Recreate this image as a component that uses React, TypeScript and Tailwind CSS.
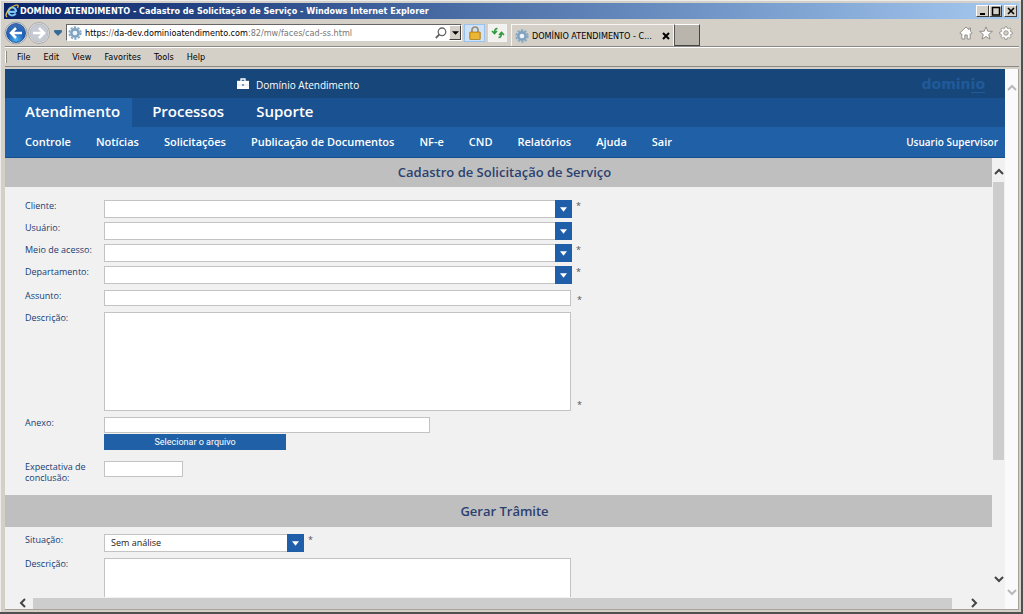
import React from "react";

const GEAR =
  "M8 0.8l1 0 .5 1.9 1.3.5 1.7-1 1.4 1.4-1 1.7.5 1.3 1.9.5v2l-1.9.5-.5 1.3 1 1.7-1.4 1.4-1.7-1-1.3.5-.5 1.9h-2l-.5-1.9-1.3-.5-1.7 1-1.4-1.4 1-1.7-.5-1.3L.7 9.100v-2l1.900-.5.5-1.300-1-1.700 1.400-1.400 1.700 1 1.300-.5L7 .8z";

function PageGear() {
  return (
    <svg viewBox="0 0 16 16" className="size-[14px] shrink-0" aria-hidden="true">
      <circle cx="8" cy="8" r="6.6" fill="none" stroke="#86a8c4" strokeWidth="2" strokeDasharray="2.6 1.55" />
      <circle cx="8" cy="8" r="4.2" fill="#eef4f8" stroke="#7fa3c0" strokeWidth="3" />
    </svg>
  );
}

function IeLogo() {
  return (
    <svg viewBox="0 0 16 16" className="size-[14px] shrink-0" aria-hidden="true">
      <path d="M12.400 9H4.600M12.600 9c.2-3-1.800-5-4.300-5-2.600 0-4.400 2-4.400 4.600s1.900 4.500 4.400 4.500c1.800 0 3.200-.8 4-2.200" fill="none" stroke="#7cc4f4" strokeWidth="2.400" />
      <path d="M2.500 14.800C-.5 14 2 8.500 6 5c4-3.600 8.500-5 9-2.800.1.800-.2 1.600-.6 2.400" fill="none" stroke="#f2c544" strokeWidth="1.400" />
    </svg>
  );
}

function NavArrows() {
  return (
    <div className="-ml-px flex items-center">
      <button type="button" aria-label="Back" className="h-6 w-6">
        <svg viewBox="0 0 24 24" className="size-6">
          <defs>
            <radialGradient id="back" cx="50%" cy="85%" r="80%">
              <stop offset="0" stopColor="#4bb2ee" />
              <stop offset=".55" stopColor="#1d5fb8" />
              <stop offset="1" stopColor="#3c70b4" />
            </radialGradient>
          </defs>
          <circle cx="12" cy="12" r="11" fill="#e4e9f0" stroke="#8a8f98" strokeWidth=".8" />
          <circle cx="12" cy="12" r="9.500" fill="url(#back)" stroke="#1b4586" strokeWidth=".8" />
          <path d="M18 12H7.500M12 7l-5 5 5 5" fill="none" stroke="#fff" strokeWidth="2.600" />
        </svg>
      </button>
      <button type="button" aria-label="Forward" className="h-6 w-[22px]">
        <svg viewBox="0 0 22 24" className="h-6 w-[22px]">
          <circle cx="11" cy="12" r="10.500" fill="#e6e7e9" stroke="#9b9b9b" strokeWidth=".8" />
          <circle cx="11" cy="12" r="9" fill="#c5cad3" stroke="#a7abb2" strokeWidth=".6" />
          <path d="M5 12h10.500M11 7l5 5-5 5" fill="none" stroke="#fff" strokeWidth="2.600" />
        </svg>
      </button>
      <button type="button" aria-label="Recent pages" className="flex w-4 justify-center">
        <svg viewBox="0 0 8 6" className="h-[6px] w-2">
          <path d="M.5.5h7v1.500L4 5.500.5 2z" fill="#2f6c9c" stroke="#1d4f78" strokeWidth=".6" />
        </svg>
      </button>
    </div>
  );
}

function CaptionButton({ label, children }: { label: string; children: React.ReactNode }) {
  return (
    <button
      type="button"
      aria-label={label}
      className="flex h-3 w-[13px] items-center justify-center border border-t-white border-r-[#404040] border-b-[#404040] border-l-white bg-[#d4d0c8]"
    >
      <svg viewBox="0 0 10 10" className="size-[10px]" fill="none" stroke="#000">
        {children}
      </svg>
    </button>
  );
}

function Chevron({ className, d }: { className: string; d: string }) {
  return (
    <svg viewBox="0 0 10 10" className={className} fill="none" stroke="currentColor" strokeWidth="2" aria-hidden="true">
      <path d={d} />
    </svg>
  );
}
const UP = "M1 7l4-4 4 4";
const DOWN = "M1 3l4 4 4-4";
const LEFT = "M7 1L3 5l4 4";
const RIGHT = "M3 1l4 4-4 4";

const box = "block border border-[#c3c3c3] bg-white text-[#222] outline-none";

function Combo({ id, wide, options }: { id: string; wide?: boolean; options: string[] }) {
  return (
    <div className={wide ? "relative w-[468px]" : "relative w-[200px]"}>
      <select id={id} className={`${box} h-[18px] w-full appearance-none px-[6px] text-[9px] leading-4`}>
        {options.map((o) => (
          <option key={o}>{o}</option>
        ))}
      </select>
      <span className="pointer-events-none absolute top-0 right-0 flex h-[18px] w-[17px] items-center justify-center bg-[#1f5fa9]">
        <svg viewBox="0 0 8 5" className="h-[5px] w-[7px]" aria-hidden="true">
          <path d="M0 0h8L4 5z" fill="#fff" />
        </svg>
      </span>
    </div>
  );
}

function Row({ id, label, mark, children }: { id: string; label: string; mark?: "top" | "bottom"; children: React.ReactNode }) {
  return (
    <div className="flex items-start">
      <label htmlFor={id} className="w-[79px] shrink-0 text-[9px] leading-[11px] font-medium text-[#173c72]">
        {label}
      </label>
      <div className="shrink-0">{children}</div>
      {mark && (
        <span className={`text-[9px] text-[#555] ${mark === "bottom" ? "ml-[6px] self-end leading-3" : "ml-1 leading-3"}`}>*</span>
      )}
    </div>
  );
}

const combos: { id: string; label: string; required: boolean }[] = [
  { id: "cliente", label: "Cliente:", required: true },
  { id: "usuario", label: "Usuário:", required: false },
  { id: "meio", label: "Meio de acesso:", required: true },
  { id: "departamento", label: "Departamento:", required: true },
];

export default function App() {
  return (
    <div className="flex h-screen flex-col overflow-hidden border-r-2 border-b-2 border-[#505050] bg-[#d4d0c8] font-['Open_Sans','Noto_Sans',sans-serif]">
      <div className="flex min-h-0 flex-1 flex-col border-t border-l border-[#ececec] pt-[2px] pr-[2px] pb-[2px] pl-1">
        <header className="shrink-0 font-['DejaVu_Sans_Condensed','DejaVu_Sans',sans-serif] text-black">
          <div className="-ml-px flex h-4 items-center gap-px bg-linear-to-r from-[#0a246a] to-[#a6caf0] pr-[2px] pl-px text-white">
            <IeLogo />
            <h1 className="flex-1 truncate text-[9px] leading-4 font-bold">
              DOMÍNIO ATENDIMENTO - Cadastro de Solicitação de Serviço - Windows Internet Explorer
            </h1>
            <div className="flex">
              <CaptionButton label="Minimize">
                <path d="M2 8h5" strokeWidth="2" />
              </CaptionButton>
              <CaptionButton label="Maximize">
                <path d="M1.500 1v8h7V1M1 1.500h8" strokeWidth="1.500" />
              </CaptionButton>
              <span className="w-[2px]" />
              <CaptionButton label="Close">
                <path d="M2 2l6 6M8 2L2 8" strokeWidth="1.600" />
              </CaptionButton>
            </div>
          </div>

          <div className="flex h-7 items-center border-b border-[#8c8984] pr-[6px]">
            <NavArrows />
            <div className="flex h-[17px] w-[396px] items-center border border-t-[#666] border-r-white border-b-white border-l-[#666] bg-white pl-px">
              <PageGear />
              <div className="ml-[3px] flex h-full min-w-0 flex-1 items-center text-[9px] leading-4 whitespace-nowrap">
                <span>https:</span>
                <span className="text-[#777]">//</span>
                <span>da-dev.</span>
                <span>dominioatendimento.com</span>
                <span className="text-[#777]">:82/mw/faces/cad-ss.html</span>
              </div>
              <button type="button" aria-label="Search" className="mr-[2px]">
                <svg viewBox="0 0 12 12" className="size-3" fill="none" stroke="#666">
                  <circle cx="7" cy="4.800" r="3.800" strokeWidth="1.300" />
                  <path d="M4.300 7.500L.8 11" strokeWidth="1.800" />
                </svg>
              </button>
              <button
                type="button"
                aria-label="Show addresses"
                className="flex h-[15px] w-3 items-center justify-center border border-t-white border-r-[#404040] border-b-[#404040] border-l-white bg-[#d4d0c8]"
              >
                <svg viewBox="0 0 8 4" className="h-1 w-[7px]">
                  <path d="M0 0h8L4 4z" />
                </svg>
              </button>
            </div>
            <button type="button" aria-label="Security report" className="ml-[2px] flex h-[18px] w-[21px] items-center justify-center border border-[#9cc3ee] bg-[#cfe2f7]">
              <svg viewBox="0 0 12 14" className="h-[14px] w-3">
                <path d="M3 7V4a3 3 0 0 1 6 0v3" fill="none" stroke="#9b8e70" strokeWidth="1.700" />
                <rect x=".7" y="6" width="10.600" height="7.500" rx=".6" fill="#e5a91e" stroke="#a8740c" strokeWidth=".7" />
                <path d="M2 8h8M2 10h8M2 12h8" stroke="#f5cf62" strokeWidth=".7" />
              </svg>
            </button>
            <button type="button" aria-label="Refresh" className="ml-[3px] flex h-[18px] w-[19px] items-center justify-center border border-[#f4f4f4] bg-[#f2f1ee]">
              <svg viewBox="0 0 14 12" className="h-3 w-[14px]" fill="none" stroke="#2f9a3c" strokeWidth="1.600">
                <path d="M6.500 1.500Q3.500 1.500 3.500 6M1 4l2.500 2.500L6 4" />
                <path d="M7.500 10.500Q10.500 10.500 10.500 6M8 8L10.500 5.500 13 8" />
              </svg>
            </button>
            <div className="ml-[4px] flex h-[22px] w-[163px] items-center self-end border-t border-r border-l border-[#f7f6f3] px-[3px]">
              <PageGear />
              <span className="ml-[3px] flex-1 text-[9px] leading-4 whitespace-nowrap">DOMÍNIO ATENDIMENTO - C...</span>
              <button type="button" aria-label="Close tab">
                <svg viewBox="0 0 8 8" className="size-2" stroke="#000" strokeWidth="2">
                  <path d="M1 1l6 6M7 1L1 7" />
                </svg>
              </button>
            </div>
            <button
              type="button"
              aria-label="New tab"
              className="h-[22px] w-[26px] self-end border border-t-white border-r-[#444] border-b-[#444] border-l-[#555] bg-[#b9b5ad]"
            />
            <div className="ml-auto flex items-center gap-[6px]">
              <button type="button" aria-label="Home">
                <svg viewBox="0 0 14 14" className="size-[14px]" fill="#fff" stroke="#8b8780" strokeWidth=".9">
                  <path d="M7 1L.8 7l1.400 1.200.6-.5V13h3V9h2.400v4h3V7.700l.6.500L13.200 7 11.500 5.300V2H10v1.800z" />
                </svg>
              </button>
              <button type="button" aria-label="Favorites">
                <svg viewBox="0 0 14 14" className="size-[14px]" fill="#fff" stroke="#8b8780" strokeWidth=".9">
                  <path d="M7 .8l1.700 4.400 4.700.2-3.700 3 1.300 4.700L7 10.500l-4 2.600 1.300-4.700-3.700-3 4.700-.2z" />
                </svg>
              </button>
              <button type="button" aria-label="Tools">
                <svg viewBox="0 0 16 16" className="size-[14px]" fill="#fff" stroke="#8b8780" strokeWidth=".9">
                  <path d={GEAR} />
                  <circle cx="8" cy="8" r="2.600" fill="#d4d0c8" />
                </svg>
              </button>
            </div>
          </div>

          <nav className="flex h-5 items-center border-t border-b border-t-white border-b-[#8c8984]">
            <span className="mr-[10px] h-3 w-[2px] border-r border-l border-r-[#8c8984] border-l-white" />
            <div className="flex gap-[13px] text-[9px] leading-4">
              {["File", "Edit", "View", "Favorites", "Tools", "Help"].map((m) => (
                <button key={m} type="button">
                  {m}
                </button>
              ))}
            </div>
          </nav>
        </header>

        <div className="mt-[2px] flex min-h-0 flex-1 border-r border-b border-[#a5a29c]">
          <div className="flex min-w-0 flex-1 flex-col">
            <div className="shrink-0 text-white">
              <div className="flex h-[29px] items-center justify-between bg-[#17477a] pr-5 pl-[232px]">
                <div className="flex items-center gap-[7px] text-[10px] font-medium">
                  <svg viewBox="0 0 12 12" className="size-3" aria-hidden="true">
                    <path d="M4 3V1h4v2" fill="none" stroke="#fff" strokeWidth="1.300" />
                    <path d="M0 2.800h12v8.200H0z" fill="#fff" />
                    <path d="M0 7h12" stroke="#b9c9da" strokeWidth=".5" />
                    <path d="M5 6.500h2v1H5z" fill="#17477a" />
                  </svg>
                  <span className="pt-1">Domínio Atendimento</span>
                </div>
                <div className="font-['DejaVu_Sans',sans-serif] text-[14px] leading-[14px] font-bold text-[#205a9b]">
                  domin<span className="border-b border-[#205a9b]">io</span>
                </div>
              </div>
              <nav className="flex h-[29px] bg-[#1a5190] text-[15px] leading-[26px] font-semibold">
                <a href="#atendimento" className="bg-[#2060a6] pr-3 pl-5">
                  Atendimento
                </a>
                <a href="#processos" className="pr-3 pl-5">
                  Processos
                </a>
                <a href="#suporte" className="px-5">
                  Suporte
                </a>
              </nav>
              <nav className="flex h-[31px] items-center border-b border-[#174f8c] bg-[#2060a6] pr-[7px] pl-5 text-[11px] font-semibold">
                <div className="flex gap-[25px]">
                  {["Controle", "Notícias", "Solicitações", "Publicação de Documentos", "NF-e", "CND", "Relatórios", "Ajuda", "Sair"].map((m) => (
                    <a key={m} href="#menu">
                      {m}
                    </a>
                  ))}
                </div>
                <span className="ml-auto text-[10px]">Usuario Supervisor</span>
              </nav>
            </div>

            <div className="flex min-h-0 flex-1 bg-[#f1f1f1]">
              <div className="flex min-w-0 flex-1 flex-col">
                <main className="min-h-0 flex-1 overflow-hidden">
                  <h2 className="bg-[#bfbfbf] pl-3 text-center text-[13px] leading-[29px] font-semibold text-[#2c4170]">
                    Cadastro de Solicitação de Serviço
                  </h2>
                  <form className="flex flex-col gap-[6px] pt-[13px] pb-3 pl-5">
                    <div className="flex flex-col gap-1">
                      {combos.map((c) => (
                        <Row key={c.id} id={c.id} label={c.label} mark={c.required ? "top" : undefined}>
                          <Combo id={c.id} wide options={[""]} />
                        </Row>
                      ))}
                    </div>
                    <Row id="assunto" label="Assunto:" mark="bottom">
                      <input id="assunto" type="text" className={`${box} h-4 w-[467px]`} />
                    </Row>
                    <Row id="descricao" label="Descrição:" mark="bottom">
                      <textarea id="descricao" className={`${box} h-[99px] w-[467px] resize-none`} />
                    </Row>
                    <Row id="anexo" label="Anexo:">
                      <input id="anexo" type="text" className={`${box} h-4 w-[326px]`} />
                      <button type="button" className="mt-px block h-4 w-[182px] bg-[#2060a6] font-[Roboto,sans-serif] text-[9px] leading-4 text-white">
                        Selecionar o arquivo
                      </button>
                    </Row>
                    <div className="pt-[5px]">
                      <Row id="expectativa" label="Expectativa de conclusão:">
                        <input id="expectativa" type="text" className={`${box} h-4 w-[79px]`} />
                      </Row>
                    </div>
                  </form>
                  <h2 className="bg-[#bfbfbf] pl-3 text-center text-[13px] leading-8 font-semibold text-[#2c4170]">Gerar Trâmite</h2>
                  <form className="flex flex-col gap-[6px] pt-[7px] pl-5">
                    <Row id="situacao" label="Situação:" mark="top">
                      <Combo id="situacao" options={["Sem análise"]} />
                    </Row>
                    <Row id="tramite" label="Descrição:">
                      <textarea id="tramite" className={`${box} h-[99px] w-[467px] resize-none`} />
                    </Row>
                  </form>
                </main>
                <div className="flex h-3 shrink-0 items-center text-[#444]">
                  <span className="flex w-7 justify-end pr-[5px]">
                    <Chevron className="size-[10px]" d={LEFT} />
                  </span>
                  <span className="h-[11px] flex-1 bg-[#cdcdcd]" />
                  <span className="w-10 pl-[17px]">
                    <Chevron className="size-[10px]" d={RIGHT} />
                  </span>
                </div>
              </div>
              <div className="flex w-[13px] shrink-0 flex-col items-center pt-[9px] pb-[25px] text-[#444]">
                <Chevron className="size-[10px] shrink-0" d={UP} />
                <span className="mt-[5px] h-2/3 w-[11px] bg-[#cdcdcd]" />
                <Chevron className="mt-auto size-[10px] shrink-0" d={DOWN} />
              </div>
            </div>
          </div>
          <div className="flex w-[13px] shrink-0 flex-col items-center justify-between bg-[#fafafc] pt-[14px] pb-3 text-[#b9b9b9]">
            <Chevron className="size-[10px]" d={UP} />
            <Chevron className="size-[10px]" d={DOWN} />
          </div>
        </div>
      </div>
    </div>
  );
}
